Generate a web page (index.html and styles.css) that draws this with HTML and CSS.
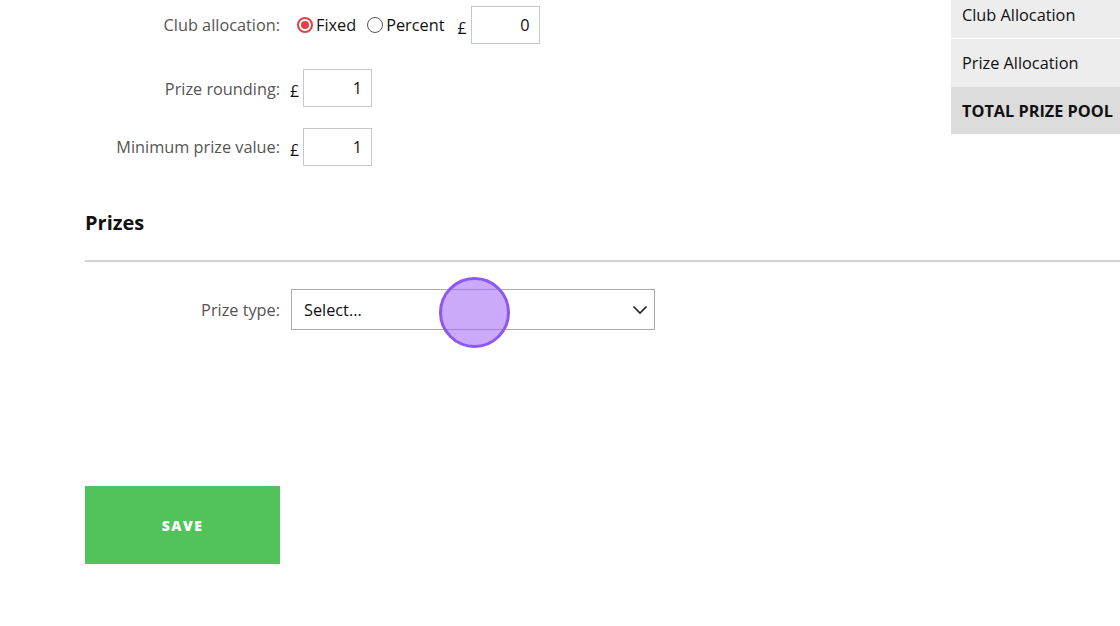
FILE: index.html
```html
<!DOCTYPE html>
<html>
<head>
<meta charset="utf-8">
<link rel="stylesheet" href="styles.css">
</head>
<body>
<div class="page">
  <section class="top-form">
    <div class="form-row row-club">
      <label class="label">Club allocation:</label>
      <div class="controls">
        <span class="radio checked"></span><span class="radio-text">Fixed</span>
        <span class="radio"></span><span class="radio-text">Percent</span>
        <span class="pound pound-club">£</span>
        <span class="input">0</span>
      </div>
    </div>
    <div class="form-row row-round">
      <label class="label">Prize rounding:</label>
      <div class="controls">
        <span class="pound">£</span>
        <span class="input">1</span>
      </div>
    </div>
    <div class="form-row row-min">
      <label class="label">Minimum prize value:</label>
      <div class="controls">
        <span class="pound">£</span>
        <span class="input">1</span>
      </div>
    </div>
  </section>
  <aside class="summary">
    <div class="sum-row first">Club Allocation</div>
    <div class="sum-row">Prize Allocation</div>
    <div class="sum-row total">TOTAL PRIZE POOL</div>
  </aside>
  <section class="prizes">
    <h2 class="section-title">Prizes</h2>
    <hr class="divider">
    <div class="form-row row-type">
      <label class="label">Prize type:</label>
      <div class="select">
        <span>Select...</span>
        <svg class="chev" width="16" height="10" viewBox="0 0 16 10"><path d="M1.5 1.5 L8 8 L14.5 1.5" fill="none" stroke="#222" stroke-width="1.6"/></svg>
        <span class="cursor"></span>
      </div>
    </div>
    <button class="save">SAVE</button>
  </section>
</div>
</body>
</html>
```

FILE: styles.css
```css
html, body {
  margin: 0;
  padding: 0;
  background: #fff;
}
body {
  font-family: "Open Sans", "Liberation Sans", sans-serif;
  color: #111;
  width: 1120px;
  height: 626px;
  overflow: hidden;
}
.page {
  display: grid;
  grid-template-columns: 1fr 169px;
  align-items: start;
}
.top-form {
  grid-column: 1;
  grid-row: 1;
  padding-left: 85px;
}
.summary {
  grid-column: 2;
  grid-row: 1;
  margin-top: -9px;
  background: #ededed;
}
.prizes {
  grid-column: 1 / 3;
  grid-row: 2;
  padding-left: 85px;
}
.form-row {
  display: flex;
  align-items: center;
}
.label {
  width: 195px;
  text-align: right;
  font-size: 16.3px;
  color: #555;
  flex-shrink: 0;
}
.controls {
  display: flex;
  align-items: center;
  font-size: 16.3px;
}
.row-club {
  height: 38px;
  margin-top: 6px;
}
.row-club .controls {
  margin-left: 17px;
}
.row-round {
  height: 38px;
  margin-top: 25px;
}
.row-min {
  height: 38px;
  margin-top: 21px;
}
.row-round .label {
  padding-top: 2px;
}
.row-round .controls, .row-min .controls {
  margin-left: 10px;
}
.radio {
  width: 16px;
  height: 16px;
  border: 1px solid #555;
  border-radius: 50%;
  box-sizing: border-box;
  display: inline-block;
  position: relative;
  margin-right: 3px;
}
.radio.checked {
  border: 2px solid #e04048;
}
.radio.checked::after {
  content: "";
  position: absolute;
  left: 2px;
  top: 2px;
  width: 8px;
  height: 8px;
  border-radius: 50%;
  background: #e04048;
}
.radio-text {
  color: #111;
  margin-right: 11px;
}
.pound {
  font-size: 16px;
  margin-top: 6px;
  margin-right: 4px;
  color: #111;
}
.pound-club {
  margin-left: 2px;
}
.input {
  width: 69px;
  height: 38px;
  box-sizing: border-box;
  border: 1px solid #c8c8c8;
  text-align: right;
  padding-right: 9px;
  line-height: 36px;
  font-size: 16.3px;
  color: #111;
}
.section-title {
  font-size: 20px;
  font-weight: 700;
  margin: 0;
  margin-top: 42px;
  line-height: 30px;
  color: #111;
}
.divider {
  border: 0;
  border-top: 2px solid #d2d2d2;
  margin: 22px 0 0 0;
}
.row-type {
  margin-top: 27px;
}
.select {
  margin-left: 11px;
  width: 364px;
  height: 41px;
  box-sizing: border-box;
  border: 1px solid #aaa;
  display: flex;
  align-items: center;
  justify-content: space-between;
  padding: 0 6px 0 12px;
  font-size: 16.3px;
  color: #111;
  position: relative;
}
.chev {
  display: block;
}
.cursor {
  position: absolute;
  left: 147px;
  top: -13px;
  width: 71px;
  height: 71px;
  box-sizing: border-box;
  border-radius: 50%;
  border: 3px solid #8d58f2;
  background: rgba(160, 100, 250, 0.55);
}
.save {
  display: block;
  margin-top: 156px;
  width: 195px;
  height: 78px;
  border: 0;
  background: #52c35a;
  color: #fff;
  font-family: "Open Sans", "Liberation Sans", sans-serif;
  font-weight: 800;
  font-size: 14px;
  letter-spacing: 1.5px;
  padding-top: 2px;
  cursor: pointer;
}
.sum-row {
  height: 48px;
  line-height: 48px;
  padding-left: 11px;
  font-size: 16.3px;
  color: #111;
  box-sizing: border-box;
  white-space: nowrap;
}
.sum-row.first {
  border-bottom: 1px solid #fff;
}
.sum-row.total {
  background: #dcdcdc;
  font-weight: 700;
  height: 47px;
  line-height: 49px;
}
```
